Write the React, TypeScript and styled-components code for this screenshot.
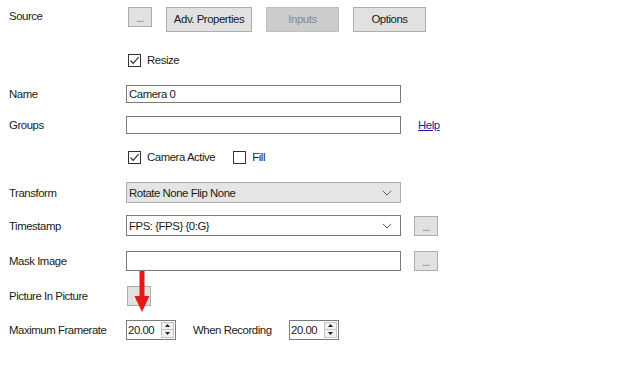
import { FC, ReactNode } from 'react'
import styled, { createGlobalStyle } from 'styled-components'

const GlobalStyle = createGlobalStyle`
	html, body {
		margin: 0;
		padding: 0;
		background: #ffffff;
	}
	body {
		font-family: 'Liberation Sans', Arial, sans-serif;
		font-size: 11.4px;
		letter-spacing: -0.45px;
		color: #1a1a1a;
	}
`

const Page = styled.div`
	position: relative;
	width: 625px;
	height: 376px;
	padding-left: 9px;
	box-sizing: border-box;
	overflow: hidden;
	background: #fff;
`

const Row = styled.div<{ $top: number; $h: number }>`
	display: flex;
	align-items: center;
	margin-top: ${(p) => p.$top}px;
	height: ${(p) => p.$h}px;
`

const Label = styled.div<{ $w?: number }>`
	width: ${(p) => p.$w ?? 117}px;
	flex-shrink: 0;
	white-space: nowrap;
`

const TopLabel = styled(Label)`
	align-self: flex-start;
	padding-top: 3px;
`

const Controls = styled.div<{ $gap?: number }>`
	display: flex;
	align-items: center;
	gap: ${(p) => p.$gap ?? 14}px;
`

const Button = styled.button<{ $w: number; $h?: number; $disabled?: boolean }>`
	width: ${(p) => p.$w}px;
	height: ${(p) => p.$h ?? 25}px;
	box-sizing: border-box;
	padding: 0;
	font: inherit;
	letter-spacing: inherit;
	color: ${(p) => (p.$disabled ? '#8a8a8a' : '#1a1a1a')};
	background: ${(p) => (p.$disabled ? '#cccccc' : '#e1e1e1')};
	border: 1px solid ${(p) => (p.$disabled ? '#bfbfbf' : '#adadad')};
	border-radius: 0;
	line-height: 1;
`

const DotsButton = styled(Button)`
	font-size: 10px;
	color: #555;
	padding-top: 4px;
`

const TextBox = styled.div<{ $w?: number; $h?: number; $bg?: string }>`
	width: ${(p) => p.$w ?? 275}px;
	height: ${(p) => p.$h ?? 18}px;
	box-sizing: border-box;
	border: 1px solid #7a7a7a;
	background: ${(p) => p.$bg ?? '#fff'};
	display: flex;
	align-items: center;
	padding-left: 2px;
	white-space: nowrap;
`

const Combo = styled(TextBox)<{ $flat?: boolean }>`
	justify-content: space-between;
	padding-right: 8px;
	border-color: ${(p) => (p.$flat ? '#adadad' : '#7a7a7a')};
`

const CheckGroup = styled.label`
	display: inline-flex;
	align-items: center;
	gap: 6px;
	margin-left: 2px;
`

const Box = styled.span`
	width: 13px;
	height: 13px;
	box-sizing: border-box;
	border: 1px solid #333;
	background: #fff;
	display: inline-flex;
	align-items: center;
	justify-content: center;
`

const HelpLink = styled.a`
	color: #1a1aa6;
	text-decoration: underline;
	margin-left: 3px;
`

const Spinner = styled.div`
	width: 50px;
	height: 20px;
	box-sizing: border-box;
	border: 1px solid #7a7a7a;
	display: flex;
	align-items: center;
	justify-content: space-between;
	padding-left: 1px;
	background: #fff;
`

const SpinButtons = styled.div`
	width: 13px;
	height: 16px;
	margin-right: 1px;
	display: flex;
	flex-direction: column;
	border: 1px solid #c5c5c5;
	box-sizing: border-box;
	background: #f0f0f0;
`

const SpinHalf = styled.div`
	flex: 1;
	display: flex;
	align-items: center;
	justify-content: center;
	&:first-child {
		border-bottom: 1px solid #c5c5c5;
	}
`

const Arrow = styled.svg`
	position: absolute;
	left: 133px;
	top: 271px;
	pointer-events: none;
`

const Check: FC<{ checked?: boolean; children: ReactNode }> = ({ checked, children }) => (
	<CheckGroup>
		<Box>
			{checked && (
				<svg width="11" height="11" viewBox="0 0 11 11">
					<path d="M1.5 5.5 L4.2 8.3 L9.6 2.2" fill="none" stroke="#333" strokeWidth="1.2" />
				</svg>
			)}
		</Box>
		{children}
	</CheckGroup>
)

const Chevron: FC = () => (
	<svg width="10" height="6" viewBox="0 0 10 6">
		<path d="M0.8 0.8 L5 5 L9.2 0.8" fill="none" stroke="#606060" strokeWidth="1" />
	</svg>
)

const Numeric: FC<{ value: string }> = ({ value }) => (
	<Spinner>
		<span>{value}</span>
		<SpinButtons>
			<SpinHalf>
				<svg width="5" height="3" viewBox="0 0 5 3">
					<path d="M0 3 L2.5 0 L5 3 Z" fill="#222" />
				</svg>
			</SpinHalf>
			<SpinHalf>
				<svg width="5" height="3" viewBox="0 0 5 3">
					<path d="M0 0 L2.5 3 L5 0 Z" fill="#222" />
				</svg>
			</SpinHalf>
		</SpinButtons>
	</Spinner>
)

const App: FC = () => {
	return (
		<>
			<GlobalStyle />
			<Page>
				<Row $top={7} $h={25}>
					<TopLabel>Source</TopLabel>
					<Controls>
						<DotsButton $w={24} $h={20} style={{ alignSelf: 'flex-start', marginLeft: 2 }}>
							...
						</DotsButton>
						<Button $w={86}>Adv. Properties</Button>
						<Button $w={73} $disabled>
							Inputs
						</Button>
						<Button $w={73}>Options</Button>
					</Controls>
				</Row>

				<Row $top={18} $h={20}>
					<Label />
					<Check checked>Resize</Check>
				</Row>

				<Row $top={15} $h={18}>
					<Label>Name</Label>
					<TextBox>Camera 0</TextBox>
				</Row>

				<Row $top={13} $h={18}>
					<Label>Groups</Label>
					<Controls $gap={14}>
						<TextBox />
						<HelpLink>Help</HelpLink>
					</Controls>
				</Row>

				<Row $top={15} $h={16}>
					<Label />
					<Controls $gap={16}>
						<Check checked>Camera Active</Check>
						<Check>Fill</Check>
					</Controls>
				</Row>

				<Row $top={17} $h={21}>
					<Label>Transform</Label>
					<Combo $flat $h={21} $bg="#e5e5e5">
						<span>Rotate None Flip None</span>
						<Chevron />
					</Combo>
				</Row>

				<Row $top={12} $h={21}>
					<Label>Timestamp</Label>
					<Controls $gap={13}>
						<Combo $h={21}>
							<span>FPS: {'{FPS}'} {'{0:G}'}</span>
							<Chevron />
						</Combo>
						<DotsButton $w={24} $h={20}>
							...
						</DotsButton>
					</Controls>
				</Row>

				<Row $top={14} $h={21}>
					<Label>Mask Image</Label>
					<Controls $gap={13}>
						<TextBox $h={20} />
						<DotsButton $w={24} $h={20}>
							...
						</DotsButton>
					</Controls>
				</Row>

				<Row $top={15} $h={20}>
					<Label>Picture In Picture</Label>
					<DotsButton $w={24} $h={20} style={{ marginLeft: 1 }}>
						...
					</DotsButton>
				</Row>

				<Row $top={13} $h={21}>
					<Label>Maximum Framerate</Label>
					<Numeric value="20.00" />
					<Label $w={96} style={{ marginLeft: 17 }}>
						When Recording
					</Label>
					<Numeric value="20.00" />
				</Row>

				<Arrow width="18" height="44" viewBox="0 0 18 44">
					<path d="M6.5 0 L11.5 0 L11.5 25 L16.5 25 L9 41 L1.5 25 L6.5 25 Z" fill="#e41818" />
				</Arrow>
			</Page>
		</>
	)
}

export default App
